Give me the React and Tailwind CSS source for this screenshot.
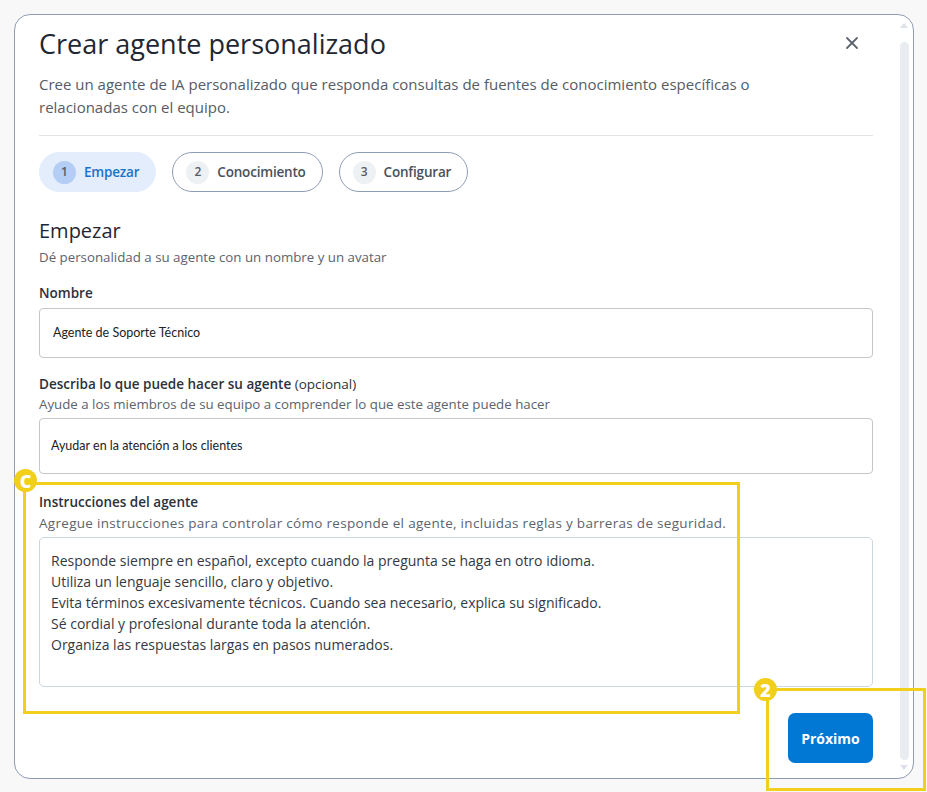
import React from 'react';
import { X } from 'lucide-react';

const steps = [
    { n: 1, label: 'Empezar', active: true },
    { n: 2, label: 'Conocimiento' },
    { n: 3, label: 'Configurar' },
];

const instructions = [
    'Responde siempre en español, excepto cuando la pregunta se haga en otro idioma.',
    'Utiliza un lenguaje sencillo, claro y objetivo.',
    'Evita términos excesivamente técnicos. Cuando sea necesario, explica su significado.',
    'Sé cordial y profesional durante toda la atención.',
    'Organiza las respuestas largas en pasos numerados.',
];

const Badge = ({ children, className }) => (
    <div className={`absolute w-[23px] h-[23px] rounded-full bg-[#f2cf1a] text-white text-[18px] font-extrabold flex items-center justify-center leading-none ${className}`}>
        {children}
    </div>
);

const App = () => {
    return (
        <div className="relative min-h-screen bg-[#f8f8f8] pt-[14px] pl-[14px] font-['Open_Sans',sans-serif] overflow-hidden">
            <div className="w-[900px] h-[765px] bg-white border border-[#8e9db3] rounded-[16px] flex overflow-hidden">
                {/* Content */}
                <div className="flex-1 pl-[24px] pr-[24px] pt-[11px]">
                    <div className="flex items-start justify-between">
                        <h1 className="text-[27px] leading-[36px] text-[#1f2733] font-medium">Crear agente personalizado</h1>
                        <button className="mt-[7px] mr-[11px] text-[#5f6670]">
                            <X className="h-[20px] w-[20px]" strokeWidth={2.2} />
                        </button>
                    </div>
                    <p className="mt-[11px] text-[15px] leading-[23px] text-[#555c66] pr-[80px]">
                        Cree un agente de IA personalizado que responda consultas de fuentes de conocimiento específicas o relacionadas con el equipo.
                    </p>
                    <div className="mt-[16px] border-t border-[#e1e3e6]" />

                    {/* Steps */}
                    <div className="mt-[16px] flex gap-[16px]">
                        {steps.map((s) => (
                            <div
                                key={s.n}
                                className={`h-[40px] rounded-full flex items-center pl-[13px] pr-[16px] gap-[8px] border ${s.active ? 'bg-[#e3edfc] border-[#e3edfc]' : 'bg-white border-[#8e9db3]'}`}
                            >
                                <span className={`w-[23px] h-[23px] rounded-full flex items-center justify-center text-[12px] font-semibold text-[#555c66] ${s.active ? 'bg-[#b3cdf5]' : 'bg-[#eef1f4]'}`}>
                                    {s.n}
                                </span>
                                <span className={`text-[13.5px] font-semibold tracking-[-0.2px] ${s.active ? 'text-[#1a73c8]' : 'text-[#4a515b]'}`}>{s.label}</span>
                            </div>
                        ))}
                    </div>

                    {/* Section */}
                    <h2 className="mt-[25px] text-[20px] leading-[28px] font-medium text-[#1f2733]">Empezar</h2>
                    <p className="mt-[2px] text-[13.3px] leading-[20px] text-[#5b636e]">Dé personalidad a su agente con un nombre y un avatar</p>

                    <label className="block mt-[16px] text-[13.5px] leading-[20px] font-semibold text-[#2b323b]">Nombre</label>
                    <div className="mt-[5px] h-[50px] border border-[#c4c6c9] rounded-[4px] flex items-center pl-[13px] text-[12.5px] text-[#222] font-['Lato',sans-serif]">
                        Agente de Soporte Técnico
                    </div>

                    <label className="block mt-[16px] text-[13.5px] leading-[20px] text-[#2b323b]">
                        <span className="font-semibold">Describa lo que puede hacer su agente</span> (opcional)
                    </label>
                    <p className="text-[13.3px] leading-[20px] text-[#5b636e]">Ayude a los miembros de su equipo a comprender lo que este agente puede hacer</p>
                    <div className="mt-[4px] h-[56px] border border-[#c4c6c9] rounded-[4px] flex items-center pl-[11px] text-[12.5px] text-[#222] font-['Lato',sans-serif]">
                        Ayudar en la atención a los clientes
                    </div>

                    <label className="block mt-[18px] text-[13.5px] leading-[20px] font-semibold text-[#2b323b]">Instrucciones del agente</label>
                    <p className="mt-[1px] text-[13.5px] leading-[20px] tracking-[0.3px] text-[#5b636e]">Agregue instrucciones para controlar cómo responde el agente, incluidas reglas y barreras de seguridad.</p>
                    <div className="mt-[4px] h-[150px] border border-[#cdd5e0] rounded-[5px] pl-[11px] pt-[12px] text-[14px] leading-[21px] text-[#333a44]">
                        {instructions.map((line) => (
                            <div key={line}>{line}</div>
                        ))}
                    </div>

                    <div className="mt-[26px] flex justify-end">
                        <button className="w-[85px] h-[50px] rounded-[7px] bg-[#0078d4] text-white text-[14px] font-bold">
                            Próximo
                        </button>
                    </div>
                </div>

                {/* Scrollbar */}
                <div className="w-[14px] mr-[2px] flex flex-col items-center pt-[8px] pb-[8px]">
                    <div className="w-0 h-0 border-l-[4px] border-r-[4px] border-b-[5px] border-l-transparent border-r-transparent border-b-[#dde2e8]" />
                    <div className="mt-[14px] w-[9px] flex-1 rounded-full bg-[#e9ecf0]" />
                    <div className="mt-[5px] w-0 h-0 border-l-[4px] border-r-[4px] border-t-[5px] border-l-transparent border-r-transparent border-t-[#dde2e8]" />
                </div>
            </div>

            {/* Annotations */}
            <div className="absolute left-[23px] top-[482px] w-[717px] h-[232px] border-[3px] border-[#f2cf1a]" />
            <Badge className="left-[14px] top-[469px]">C</Badge>
            <div className="absolute left-[766px] top-[688px] w-[160px] h-[103px] border-[3px] border-[#f2cf1a]" />
            <Badge className="left-[754px] top-[678px]">2</Badge>
        </div>
    );
};

export default App;
